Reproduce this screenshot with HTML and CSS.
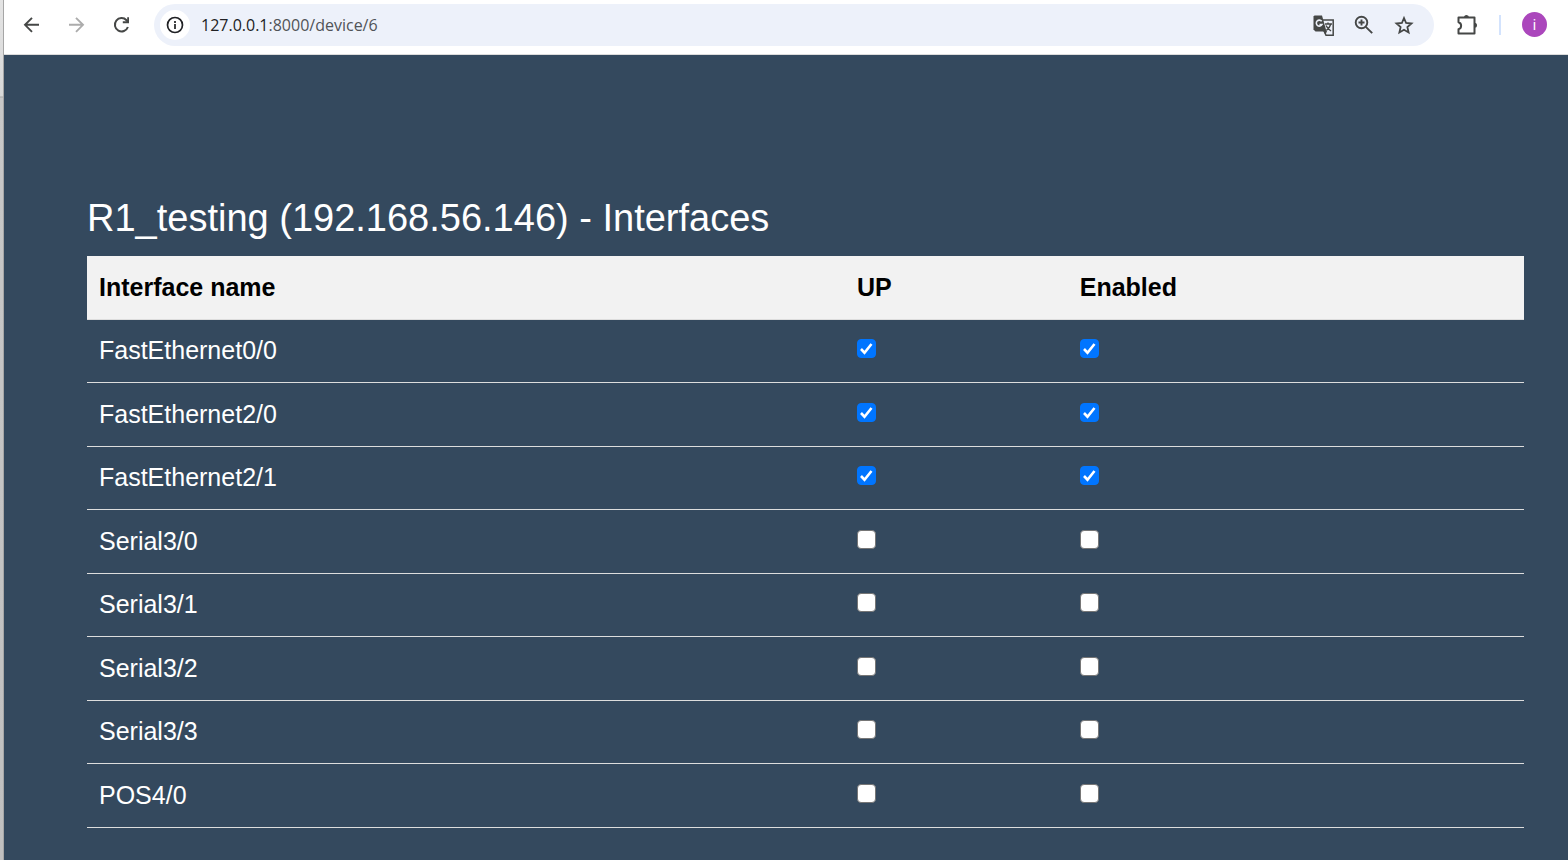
FILE: index.html
```html
<!DOCTYPE html>
<html lang="en">
<head>
<meta charset="utf-8">
<title>R1_testing - Interfaces</title>
<link rel="stylesheet" href="styles.css">
</head>
<body>
<div class="desktop-edge"></div>
<div class="window">
  <header class="toolbar">
    <nav class="nav-buttons" aria-label="Navigation">
      <button class="icon-button" type="button" aria-label="Back">
        <svg width="24" height="24" viewBox="0 0 24 24" fill="none" stroke="#454746" stroke-width="1.900"><path d="M19 11.800H5.500M12 4.800 5 11.800l7 7"/></svg>
      </button>
      <button class="icon-button" type="button" aria-label="Forward">
        <svg width="24" height="24" viewBox="0 0 24 24" fill="none" stroke="#acacac" stroke-width="1.900"><path d="M4 11.800h13.500M11 4.800 18 11.800l-7 7"/></svg>
      </button>
      <button class="icon-button" type="button" aria-label="Reload">
        <svg width="24" height="24" viewBox="0 0 24 24" fill="none" stroke="#454746" stroke-width="2"><path d="M17.900 14A6.700 6.700 0 1 1 16.500 7.200L18 9"/><path d="M12.800 10.300h6.200V4.200h-1.800v4.100h-4.400z" fill="#454746" stroke="none"/></svg>
      </button>
    </nav>
    <div class="address-bar">
      <button class="site-info" type="button" aria-label="Site information">
        <svg width="20" height="20" viewBox="0 0 20 20" fill="none" stroke="#202124" stroke-width="1.700"><circle cx="10" cy="10" r="7.500"/><path d="M10 9v5M10 6v2"/></svg>
      </button>
      <a class="url" href="#"><span class="host">127.0.0.1</span>:8000/device/6</a>
      <div class="address-actions">
        <button class="icon-button" type="button" aria-label="Translate">
          <svg width="24" height="24" viewBox="0 0 24 24" fill="none" stroke="#454746"><path d="M11 7h10.200v15.200H14L12 18" stroke-width="1.500"/><path d="M2.500 2.500H10L14.500 18.500H3.500L1.500 16.500V3.500z" fill="#454746" stroke="none"/><path d="M9.700 8.300A3 3 0 1 0 10 11.500H7.500" stroke="#edf1fa" stroke-width="1.600"/><path d="M13 11h7M16 9.500V11M18.800 11c-.8 3-2.300 4.800-4.500 6.500M14 12.500c1 2 2.700 4 5 5.500" stroke-width="1.400"/><path d="M11.500 18h3.500L13.500 22z" fill="#454746" stroke="none"/></svg>
        </button>
        <button class="icon-button" type="button" aria-label="Zoom">
          <svg width="24" height="24" viewBox="0 0 24 24" fill="none" stroke="#454746" stroke-width="1.900"><circle cx="9.500" cy="9.500" r="5.800"/><path d="m13.800 13.800 6.400 6.400M9.500 6.500v6M6.500 9.500h6"/></svg>
        </button>
        <button class="icon-button" type="button" aria-label="Bookmark">
          <svg width="24" height="24" viewBox="0 0 24 24" fill="none" stroke="#454746" stroke-width="1.800"><path d="m12 5 2.100 5 5.400.5-4.100 3.600 1.200 5.400L12 16.700l-4.600 2.800 1.200-5.400-4.100-3.600L9.900 10z"/></svg>
        </button>
      </div>
    </div>
    <div class="tools">
      <button class="icon-button" type="button" aria-label="Extensions">
        <svg width="24" height="24" viewBox="0 0 24 24" fill="none" stroke="#454746" stroke-width="2"><path d="M3.500 4.500h16V20.500h-16V16.300c3.500-1 3.500-6.100 0-7.100z" stroke-linejoin="round"/><path d="M9 4.500a2.500 2.500 0 0 1 5 0zM19.500 9.700a2.500 2.500 0 0 1 0 5z" fill="#454746" stroke="none"/></svg>
      </button>
      <span class="divider"></span>
      <button class="avatar" type="button" aria-label="Profile">i</button>
    </div>
  </header>
  <main class="page">
    <h1 class="title">R1_testing (192.168.56.146) - Interfaces</h1>
    <table class="interfaces">
      <colgroup><col class="col-name"><col class="col-up"><col class="col-enabled"></colgroup>
      <thead>
        <tr><th scope="col">Interface name</th><th scope="col">UP</th><th scope="col">Enabled</th></tr>
      </thead>
      <tbody>
        <tr><td>FastEthernet0/0</td><td><input type="checkbox" aria-label="FastEthernet0/0 up" checked></td><td><input type="checkbox" aria-label="FastEthernet0/0 enabled" checked></td></tr>
        <tr><td>FastEthernet2/0</td><td><input type="checkbox" aria-label="FastEthernet2/0 up" checked></td><td><input type="checkbox" aria-label="FastEthernet2/0 enabled" checked></td></tr>
        <tr><td>FastEthernet2/1</td><td><input type="checkbox" aria-label="FastEthernet2/1 up" checked></td><td><input type="checkbox" aria-label="FastEthernet2/1 enabled" checked></td></tr>
        <tr><td>Serial3/0</td><td><input type="checkbox" aria-label="Serial3/0 up"></td><td><input type="checkbox" aria-label="Serial3/0 enabled"></td></tr>
        <tr><td>Serial3/1</td><td><input type="checkbox" aria-label="Serial3/1 up"></td><td><input type="checkbox" aria-label="Serial3/1 enabled"></td></tr>
        <tr><td>Serial3/2</td><td><input type="checkbox" aria-label="Serial3/2 up"></td><td><input type="checkbox" aria-label="Serial3/2 enabled"></td></tr>
        <tr><td>Serial3/3</td><td><input type="checkbox" aria-label="Serial3/3 up"></td><td><input type="checkbox" aria-label="Serial3/3 enabled"></td></tr>
        <tr><td>POS4/0</td><td><input type="checkbox" aria-label="POS4/0 up"></td><td><input type="checkbox" aria-label="POS4/0 enabled"></td></tr>
      </tbody>
    </table>
  </main>
</div>
</body>
</html>
```
FILE: styles.css
```css
* {
  box-sizing: border-box;
}

body {
  display: flex;
  min-height: 100vh;
  margin: 0;
  background: #34495e;
  font-family: "Liberation Sans", Arial, sans-serif;
}

button {
  padding: 0;
  border: 0;
  background: none;
}

.desktop-edge {
  width: 4px;
  border-right: 1px solid #a6a6a6;
  background: linear-gradient(#e4e4e4, #d8d8d8 96px, #a8a8a8 97px, #c8c8c8 98px, #c0c0c0);
}

.window {
  flex: 1;
  min-width: 0;
}

.toolbar {
  display: flex;
  align-items: center;
  height: 55px;
  padding: 0 21px 5px 16px;
  border-bottom: 1px solid #dcdcdc;
  background: #fff;
}

.nav-buttons {
  display: flex;
  gap: 21px;
}

.icon-button {
  display: flex;
  width: 24px;
  height: 24px;
}

.address-bar {
  display: flex;
  flex: 1;
  align-items: center;
  height: 42px;
  margin-left: 20px;
  padding: 0 18px 0 6px;
  border-radius: 21px;
  background: #edf1fa;
}

.site-info {
  display: flex;
  align-items: center;
  justify-content: center;
  width: 30px;
  height: 30px;
  border-radius: 50%;
  background: #fff;
}

.url {
  margin-left: 11px;
  color: #505357;
  font-family: "Open Sans", "Noto Sans", sans-serif;
  font-size: 16px;
  text-decoration: none;
}

.host {
  color: #202124;
}

.address-actions {
  display: flex;
  gap: 16px;
  margin-left: auto;
}

.tools {
  display: flex;
  align-items: center;
  margin-left: 21px;
}

.divider {
  width: 2px;
  height: 20px;
  margin: 0 21px 0 20px;
  background: #d3e3fd;
}

.avatar {
  width: 25px;
  height: 25px;
  border-radius: 50%;
  background: #ab47bc;
  color: #fff;
  font-family: Roboto, sans-serif;
  font-size: 14px;
}

.page {
  padding: 141px 44px 32px 83px;
}

.title {
  margin: 0 0 16px;
  color: #fff;
  font-size: 38px;
  font-weight: 400;
  line-height: 44px;
}

.interfaces {
  width: 100%;
  border-collapse: separate;
  border-spacing: 0;
  table-layout: fixed;
  color: #fff;
  font-size: 25px;
  line-height: 28px;
}

.col-name {
  width: 52.75%;
}

.col-up {
  width: 15.5%;
}

.interfaces th,
.interfaces td {
  height: 64px;
  padding: 0 12px 2px;
  border-bottom: 1px solid #ddd;
  text-align: left;
}

.interfaces th {
  background: #f2f2f2;
  color: #000;
}

.interfaces tbody tr:nth-child(odd) td {
  height: 63px;
}

.interfaces input {
  display: block;
  width: 19px;
  height: 19px;
  margin: 0 0 3px;
  appearance: none;
  border: 1px solid #767676;
  border-radius: 4px;
  background: #fff;
}

.interfaces input:checked {
  border-color: #0075ff;
  background: #0075ff url("data:image/svg+xml,%3Csvg xmlns='http://www.w3.org/2000/svg' viewBox='0 0 17 17'%3E%3Cpath d='M3 9l3.500 3.700L13.500 4' fill='none' stroke='white' stroke-width='2.600'/%3E%3C/svg%3E") center / 17px 17px no-repeat;
}
```
